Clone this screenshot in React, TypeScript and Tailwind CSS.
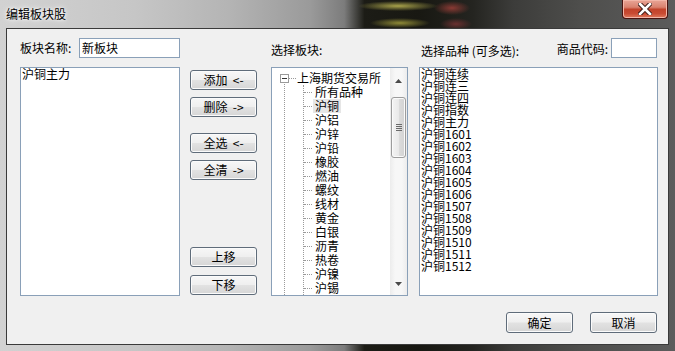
import React from "react";

const btn =
  "h-[20px] w-[67px] rounded-[3px] border border-[#5f6c7a] bg-[linear-gradient(to_bottom,#f7f7f7_0%,#efefef_48%,#e2e2e2_52%,#d6d6d6_100%)] shadow-[inset_0_0_0_1px_#fbfbfb] text-[12px] leading-none text-black flex items-center justify-center whitespace-pre";

const treeItems = [
  "所有品种",
  "沪铜",
  "沪铝",
  "沪锌",
  "沪铅",
  "橡胶",
  "燃油",
  "螺纹",
  "线材",
  "黄金",
  "白银",
  "沥青",
  "热卷",
  "沪镍",
  "沪锡",
];

const rightItems = [
  "沪铜连续",
  "沪铜连三",
  "沪铜连四",
  "沪铜指数",
  "沪铜主力",
  "沪铜1601",
  "沪铜1602",
  "沪铜1603",
  "沪铜1604",
  "沪铜1605",
  "沪铜1606",
  "沪铜1507",
  "沪铜1508",
  "沪铜1509",
  "沪铜1510",
  "沪铜1511",
  "沪铜1512",
];

function Arrow({ up }: { up?: boolean }) {
  return (
    <svg width="7" height="4" viewBox="0 0 7 4">
      {up ? (
        <polygon points="0,4 7,4 3.5,0" fill="#4a4a4a" />
      ) : (
        <polygon points="0,0 7,0 3.5,4" fill="#4a4a4a" />
      )}
    </svg>
  );
}

export default function App() {
  return (
    <div className="w-[675px] h-[351px] relative overflow-hidden flex flex-col font-['Noto_Sans_CJK_SC','Liberation_Sans',sans-serif] text-black bg-[radial-gradient(ellipse_40px_5px_at_398px_6px,#a8a24a,transparent),radial-gradient(ellipse_30px_5px_at_400px_23px,#8f8a36,transparent),radial-gradient(ellipse_18px_7px_at_452px_8px,#8a3a34,transparent),radial-gradient(ellipse_16px_6px_at_456px_24px,#6a3030,transparent),linear-gradient(90deg,#d2d2d2_0%,#c6c6c6_20%,#b4b4b4_34%,#9a9a9a_46%,#7c7c7c_51%,#1c1c16_54%,#181812_62%,#242420_70%,#3c3c3a_76%,#4e4e4c_86%,#5c5c5c_100%)]">
      {/* Title bar */}
      <div className="h-[28px] flex items-center pl-[6px] shrink-0">
        <span className="text-[12px] leading-none text-black [text-shadow:0_0_6px_#ffffff,0_0_3px_#ffffff]">
          编辑板块股
        </span>
      </div>
      <div className="absolute right-[7px] top-0 w-[46px] h-[19px] rounded-b-[4px] border border-t-0 border-[#4a1410] bg-[linear-gradient(to_bottom,#e9a596_0%,#d9826f_40%,#c2432b_52%,#c94b33_75%,#e07a5e_100%)] shadow-[inset_0_0_0_1px_#f2b6a8] flex items-center justify-center">
        <svg width="14" height="12" viewBox="0 0 14 12">
          <path
            d="M2 1 L12 11 M12 1 L2 11"
            stroke="#3a1a16"
            strokeWidth="4.5"
            strokeLinecap="square"
          />
          <path
            d="M2 1 L12 11 M12 1 L2 11"
            stroke="#ffffff"
            strokeWidth="2.6"
            strokeLinecap="square"
          />
        </svg>
      </div>

      {/* Client area */}
      <div className="flex-1 flex pl-[6px] pr-[6px] pb-[6px]">
        <div className="flex-1 border border-[#3a3a3a] bg-[#f0f0f0] flex flex-col pl-[13px] pt-[9px] pr-[10px]">
          <div className="flex">
            {/* Column 1 */}
            <div className="w-[160px] flex flex-col">
              <div className="h-[20px] flex items-center justify-between">
                <span className="text-[12px] leading-none">板块名称:</span>
                <div className="w-[101px] h-[20px] border border-[#8aa0b8] bg-white flex items-center pl-[2px] text-[12px] leading-none">
                  新板块
                </div>
              </div>
              <div className="mt-[9px] h-[229px] border border-[#8aa0b8] bg-white pl-[1px] text-[12px] leading-[12px]">
                <div>沪铜主力</div>
              </div>
            </div>

            {/* Column 2: buttons */}
            <div className="ml-[10px] w-[67px] flex flex-col pt-[32px]">
              <div className={btn}>{"添加  <-"}</div>
              <div className={btn + " mt-[7px]"}>{"删除  ->"}</div>
              <div className={btn + " mt-[16px]"}>{"全选  <-"}</div>
              <div className={btn + " mt-[7px]"}>{"全清  ->"}</div>
              <div className={btn + " mt-[67px]"}>上移</div>
              <div className={btn + " mt-[8px]"}>下移</div>
            </div>

            {/* Column 3: tree */}
            <div className="ml-[14px] w-[137px] flex flex-col">
              <div className="h-[20px] flex items-center">
                <span className="text-[12px] leading-none pt-[3px]">选择板块:</span>
              </div>
              <div className="mt-[9px] h-[229px] border border-[#8aa0b8] bg-white flex overflow-hidden">
                <div className="flex-1 relative pt-[3px] overflow-hidden">
                  {/* tree lines */}
                  <div className="absolute left-[12px] top-[16px] bottom-0 border-l border-dotted border-[#9a9a9a]" />
                  <div className="absolute left-[31px] top-[17px] bottom-0 border-l border-dotted border-[#9a9a9a]" />
                  {/* root row */}
                  <div className="h-[14px] flex items-center">
                    <div className="ml-[8px] w-[9px] h-[9px] border border-[#9a9a9a] bg-white flex items-center justify-center">
                      <div className="w-[5px] h-px bg-[#333]" />
                    </div>
                    <div className="w-[7px] border-t border-dotted border-[#9a9a9a]" />
                    <span className="ml-[1px] text-[12px] leading-none">上海期货交易所</span>
                  </div>
                  {treeItems.map((t) => (
                    <div key={t} className="h-[14px] flex items-center">
                      <div className="ml-[32px] w-[8px] border-t border-dotted border-[#9a9a9a]" />
                      <span
                        className={
                          "ml-[1px] px-[2px] h-[14px] flex items-center text-[12px] leading-none " +
                          (t === "沪铜" ? "bg-[#e6e6e6]" : "")
                        }
                      >
                        {t}
                      </span>
                    </div>
                  ))}
                </div>
                {/* scrollbar */}
                <div className="w-[17px] h-full flex flex-col bg-[linear-gradient(to_right,#ececec,#f7f7f7_30%,#f7f7f7_70%,#ececec)]">
                  <div className="h-[26px] flex items-center justify-center">
                    <Arrow up />
                  </div>
                  <div className="mt-[3px] mx-[1px] h-[61px] rounded-[3px] border border-[#9c9c9c] bg-[linear-gradient(to_right,#f4f4f4_0%,#e9e9e9_50%,#dcdcdc_52%,#d2d2d2_100%)] shadow-[inset_0_0_0_1px_#fafafa] flex flex-col items-center justify-center gap-[1px]">
                    <div className="w-[6px] h-px bg-[#6a6a6a]" />
                    <div className="w-[6px] h-px bg-[#6a6a6a]" />
                    <div className="w-[6px] h-px bg-[#6a6a6a]" />
                    <div className="w-[6px] h-px bg-[#6a6a6a]" />
                  </div>
                  <div className="flex-1" />
                  <div className="h-[23px] flex items-center justify-center">
                    <Arrow />
                  </div>
                </div>
              </div>
            </div>

            {/* Column 4 */}
            <div className="ml-[11px] w-[239px] flex flex-col">
              <div className="h-[20px] flex items-center">
                <span className="text-[12px] leading-none pt-[5px] pl-[2px]">选择品种 (可多选):</span>
                <span className="ml-auto text-[12px] leading-none pt-[1px]">商品代码:</span>
                <div className="ml-[3px] mr-[1px] w-[46px] h-[20px] border border-[#8aa0b8] bg-white" />
              </div>
              <div className="mt-[9px] h-[229px] border border-[#8aa0b8] bg-white pl-[1px] overflow-hidden">
                {rightItems.map((t) => (
                  <div key={t} className="h-[12px] flex items-center text-[12px] leading-none whitespace-nowrap">
                    {t}
                  </div>
                ))}
              </div>
            </div>
          </div>

          {/* bottom buttons */}
          <div className="mt-[16px] flex justify-end pr-[1px] gap-[17px]">
            <div className={btn + " h-[21px] border-[#3c6a98] shadow-[inset_0_0_0_1px_#d8ecfa]"}>确定</div>
            <div className={btn + " h-[21px]"}>取消</div>
          </div>
        </div>
      </div>
    </div>
  );
}
